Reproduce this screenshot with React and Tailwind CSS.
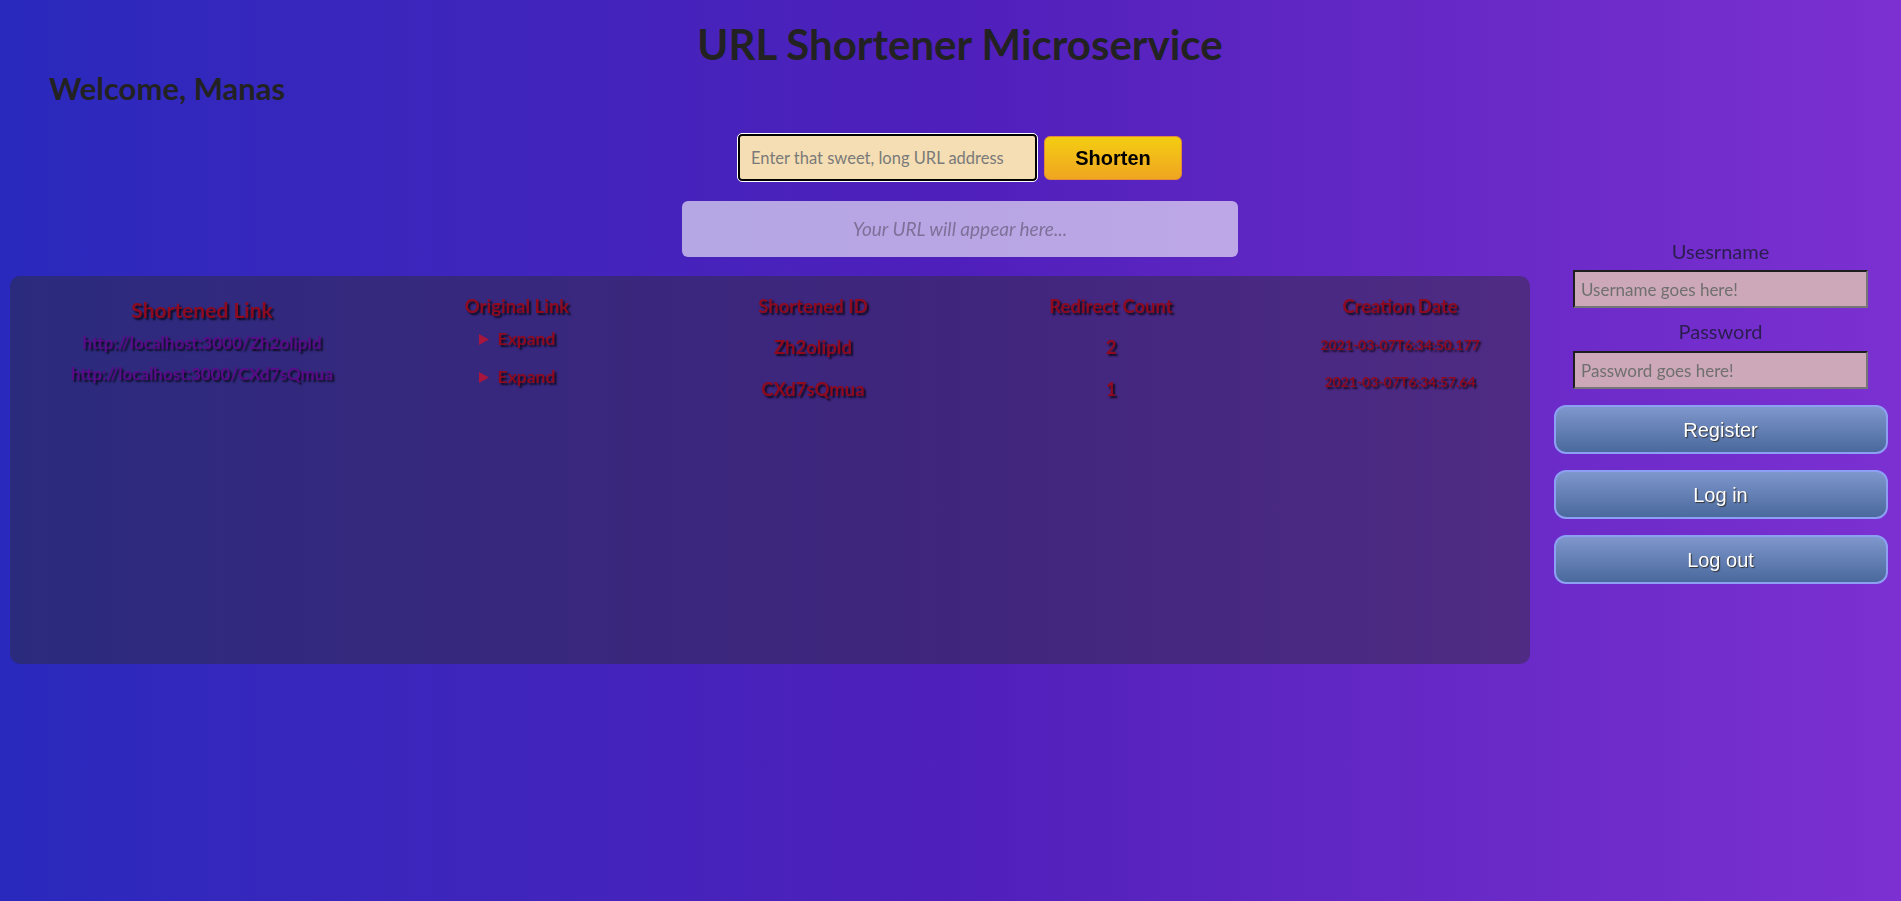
import { useState } from "react";

const links = [
  {
    short: "http://localhost:3000/Zh2olipId",
    id: "Zh2olipId",
    count: 2,
    date: "2021-03-07T6:34:50.177",
  },
  {
    short: "http://localhost:3000/CXd7sQmua",
    id: "CXd7sQmua",
    count: 1,
    date: "2021-03-07T6:34:57.64",
  },
];

const shadow = "[text-shadow:2px_2px_2px_rgba(0,0,0,0.75)]";

const Triangle = () => (
  <svg width="10" height="11" viewBox="0 0 10 11" className="shrink-0">
    <polygon points="0,0 10,5.5 0,11" fill="#a8163e" />
  </svg>
);

const AuthButton = ({ children }) => (
  <button className="w-[334px] h-[49px] rounded-[12px] border-2 border-[#8d9ff2] bg-linear-to-b from-[#7f97cc] to-[#4a699c] text-white text-[20px] font-['Liberation_Sans',Arial,sans-serif] [text-shadow:1px_1px_1px_#333]">
    {children}
  </button>
);

const App = () => {
  const [url, setUrl] = useState("");
  const [username, setUsername] = useState("");
  const [password, setPassword] = useState("");

  return (
    <div className="min-h-screen w-full bg-linear-to-r from-[#2929bd] via-[#4f1fbb] to-[#7c30d1] font-['Lato',sans-serif] text-[#222]">
      <h1 className="pt-[22px] pl-[19px] text-center text-[42px] leading-[44px] font-bold text-[#222]">
        URL Shortener Microservice
      </h1>
      <h2 className="mt-[5px] pl-[49px] text-[31px] leading-[34px] font-bold text-[#222]">
        Welcome, Manas
      </h2>

      <div className="mt-[29px] pl-[19px] flex justify-center items-center gap-[7px]">
        <input
          autoFocus
          value={url}
          onChange={(e) => setUrl(e.target.value)}
          placeholder="Enter that sweet, long URL address"
          className="w-[299px] h-[47px] pl-[11px] rounded-[4px] border-2 border-black outline outline-1 outline-white bg-[#f5deb3] text-[16.5px] placeholder:text-[#7a7a7a] caret-black"
        />
        <button className="w-[138px] h-[44px] rounded-[6px] border border-[#e28a3a] bg-linear-to-b from-[#f3cd10] to-[#efa520] text-black text-[20px] font-bold font-['Liberation_Sans',Arial,sans-serif]">
          Shorten
        </button>
      </div>

      <div className="mt-[20px] pl-[19px] flex justify-center">
        <div className="w-[556px] h-[56px] rounded-[6px] bg-white/60 flex items-center justify-center">
          <span className="italic text-[19px] text-[#7e7199]">
            Your URL will appear here...
          </span>
        </div>
      </div>

      <div className="-mt-[19px] flex items-start">
        <div className="ml-[10px] mt-[38px] w-[1520px] h-[388px] rounded-[10px] bg-[rgba(46,46,46,0.44)] pl-[40px] flex font-bold">
          <div className="w-[304px] flex flex-col items-center">
            <div className={`pt-[22px] text-[21px] leading-[24px] text-[#8f0a1f] ${shadow}`}>
              Shortened Link
            </div>
            <div className="mt-[5px] flex flex-col items-center">
              {links.map((l) => (
                <a
                  key={l.id}
                  href="#"
                  className={`text-[17px] leading-[31px] text-[#5a0c88] ${shadow}`}
                >
                  {l.short}
                </a>
              ))}
            </div>
          </div>

          <div className="w-[326px] flex flex-col items-center">
            <div className={`pt-[19px] text-[18.5px] leading-[22px] text-[#8f0a1f] ${shadow}`}>
              Original Link
            </div>
            <div className="mt-[3px] flex flex-col items-center">
              {links.map((l) => (
                <div
                  key={l.id}
                  className={`flex items-center gap-[9px] h-[38px] text-[17.5px] text-[#8f0a1f] ${shadow}`}
                >
                  <Triangle />
                  <span>Expand</span>
                </div>
              ))}
            </div>
          </div>

          <div className="w-[266px] flex flex-col items-center">
            <div className={`pt-[19px] text-[18.5px] leading-[22px] text-[#8f0a1f] ${shadow}`}>
              Shortened ID
            </div>
            <div className="mt-[9px] flex flex-col items-center">
              {links.map((l) => (
                <div
                  key={l.id}
                  className={`text-[18.5px] leading-[42px] text-[#8f0a1f] ${shadow}`}
                >
                  {l.id}
                </div>
              ))}
            </div>
          </div>

          <div className="w-[330px] flex flex-col items-center">
            <div className={`pt-[19px] text-[18.5px] leading-[22px] text-[#8f0a1f] ${shadow}`}>
              Redirect Count
            </div>
            <div className="mt-[9px] flex flex-col items-center">
              {links.map((l) => (
                <div
                  key={l.id}
                  className={`text-[18.5px] leading-[42px] text-[#8f0a1f] ${shadow}`}
                >
                  {l.count}
                </div>
              ))}
            </div>
          </div>

          <div className="w-[248px] flex flex-col items-center">
            <div className={`pt-[19px] text-[18.5px] leading-[22px] text-[#8f0a1f] ${shadow}`}>
              Creation Date
            </div>
            <div className="mt-[9px] flex flex-col items-center">
              {links.map((l) => (
                <div
                  key={l.id}
                  className={`text-[14px] leading-[37px] text-[#8f0a1f] ${shadow}`}
                >
                  {l.date}
                </div>
              ))}
            </div>
          </div>
        </div>

        <div className="ml-[10px] flex-1 flex flex-col items-center">
          <label className="text-[20px] leading-[27px] text-[#2b1d4f]">
            Usesrname
          </label>
          <input
            value={username}
            onChange={(e) => setUsername(e.target.value)}
            placeholder="Username goes here!"
            className="mt-[5px] w-[295px] h-[38px] pl-[6px] border-2 border-[#767676] border-t-[#1e1e1e] border-l-[#1e1e1e] bg-[#cda8b8] text-[17px] placeholder:text-[#6f6f6f] outline-none"
          />
          <label className="mt-[10px] text-[20px] leading-[27px] text-[#2b1d4f]">
            Password
          </label>
          <input
            type="password"
            value={password}
            onChange={(e) => setPassword(e.target.value)}
            placeholder="Password goes here!"
            className="mt-[6px] w-[295px] h-[38px] pl-[6px] border-2 border-[#767676] border-t-[#1e1e1e] border-l-[#1e1e1e] bg-[#cda8b8] text-[17px] placeholder:text-[#6f6f6f] outline-none"
          />
          <div className="mt-[16px] flex flex-col gap-[16px]">
            <AuthButton>Register</AuthButton>
            <AuthButton>Log in</AuthButton>
            <AuthButton>Log out</AuthButton>
          </div>
        </div>
      </div>
    </div>
  );
};

export default App;
